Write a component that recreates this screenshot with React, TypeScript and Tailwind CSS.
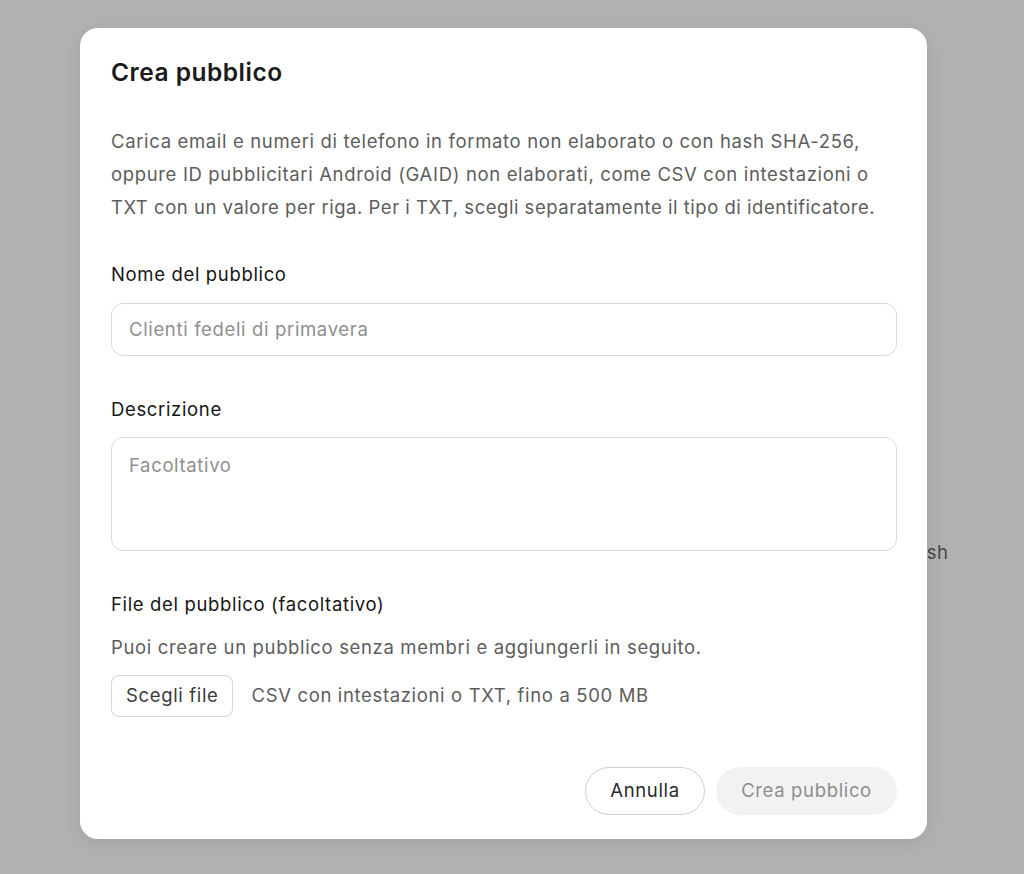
import React from "react";

export default function App() {
  return (
    <div
      className="relative w-[1024px] h-[874px] bg-[#b1b1b1] overflow-hidden"
      style={{ fontFamily: "Inter, 'Noto Sans', sans-serif" }}
    >
      <div className="absolute left-[904px] top-[538px] text-[18.5px] tracking-[0.65px] leading-[28px] text-[#474747]">
        hash
      </div>
      <div className="relative ml-[80px] pt-[28px]">
        <div className="w-[847px] h-[811px] bg-white rounded-[18px] shadow-[0_4px_16px_rgba(0,0,0,0.08)] pl-[31px] pr-[30px] pt-[28px] pb-[24px] flex flex-col text-[18.5px] tracking-[0.65px]">
          <h1 className="text-[24.5px] tracking-[0.5px] leading-[32px] font-semibold text-[#1a1a1a]">
            Crea pubblico
          </h1>
          <p className="mt-[37px] leading-[33px] text-[#5d5d5d]">
            Carica email e numeri di telefono in formato non elaborato o con hash SHA-256,
            <br />
            oppure ID pubblicitari Android (GAID) non elaborati, come CSV con intestazioni o
            <br />
            <span className="tracking-[0.52px]">
              TXT con un valore per riga. Per i TXT, scegli separatamente il tipo di identificatore.
            </span>
          </p>

          <label className="mt-[36px] leading-[28px] text-[#161616]">
            Nome del pubblico
          </label>
          <div className="mt-[15px] h-[53px] w-full rounded-[12px] border border-[#dadada] flex items-center pl-[17px]">
            <span className="text-[#8f8f8f]">Clienti fedeli di primavera</span>
          </div>

          <label className="mt-[39px] leading-[28px] text-[#161616]">
            Descrizione
          </label>
          <div className="mt-[14px] h-[114px] w-full rounded-[12px] border border-[#dadada] pl-[17px] pt-[13px]">
            <span className="block leading-[28px] text-[#8f8f8f]">Facoltativo</span>
          </div>

          <label className="mt-[39px] leading-[28px] text-[#161616]">
            File del pubblico (facoltativo)
          </label>
          <p className="mt-[15px] leading-[28px] text-[#5d5d5d]">
            Puoi creare un pubblico senza membri e aggiungerli in seguito.
          </p>
          <div className="mt-[14px] flex items-center gap-[18px]">
            <div className="h-[42px] px-[14px] rounded-[8px] border border-[#d6d6d6] flex items-center text-[#3a3a3a]">
              Scegli file
            </div>
            <span className="text-[#5d5d5d]">
              CSV con intestazioni o TXT, fino a 500 MB
            </span>
          </div>

          <div className="mt-auto flex justify-end gap-[11px]">
            <div className="h-[48px] w-[120px] rounded-full border border-[#cfcfcf] flex items-center justify-center text-[#2a2a2a]">
              Annulla
            </div>
            <div className="h-[48px] w-[181px] rounded-full bg-[#f2f2f2] flex items-center justify-center text-[#8e8e8e]">
              Crea pubblico
            </div>
          </div>
        </div>
      </div>
    </div>
  );
}
